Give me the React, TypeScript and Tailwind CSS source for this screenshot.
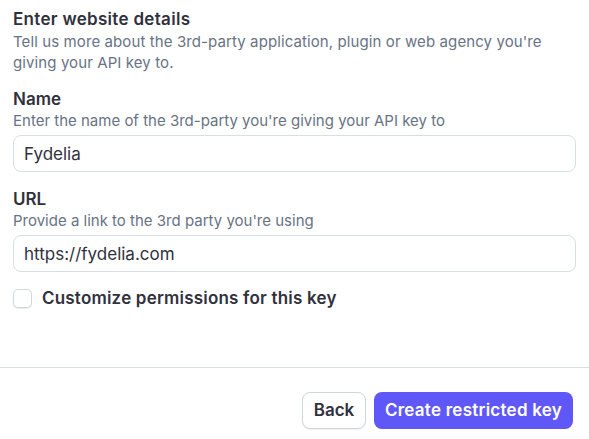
export default function App() {
  return (
    <div className="w-[589px] h-[439px] bg-white flex flex-col text-[#30313d]" style={{ fontFamily: 'Inter, "Noto Sans", sans-serif' }}>
      <div className="flex-1 px-[13px] pt-[7px]">
        <h2 className="text-[17px] leading-[24px] font-semibold tracking-[0.3px]">Enter website details</h2>
        <p className="text-[15px] leading-[21px] text-[#687385] tracking-[0.1px]">
          Tell us more about the 3rd-party application, plugin or web agency you're giving your API key to.
        </p>

        <div className="mt-[14px]">
          <label className="block text-[17px] leading-[24px] font-semibold">Name</label>
          <p className="text-[15px] leading-[20px] text-[#687385]">Enter the name of the 3rd-party you're giving your API key to</p>
          <input
            defaultValue="Fydelia"
            className="mt-[4px] w-full h-[37px] rounded-[8px] border border-[#d8dee4] px-[10px] text-[17px] text-[#30313d] outline-none"
          />
        </div>

        <div className="mt-[15px]">
          <label className="block text-[17px] leading-[24px] font-semibold">URL</label>
          <p className="text-[15px] leading-[20px] text-[#687385]">Provide a link to the 3rd party you're using</p>
          <input
            defaultValue="https://fydelia.com"
            className="mt-[4px] w-full h-[37px] rounded-[8px] border border-[#d8dee4] px-[10px] text-[17px] text-[#30313d] outline-none"
          />
        </div>

        <label className="mt-[14px] flex items-center gap-[10px]">
          <span className="w-[19px] h-[19px] rounded-[5px] border border-[#d0d6de] shadow-[0_1px_1px_rgba(0,0,0,0.08)] bg-white" />
          <span className="text-[17px] font-semibold tracking-[0.2px]">Customize permissions for this key</span>
        </label>
      </div>

      <div className="border-t border-[#d8dee4] h-[72px] flex items-start justify-end gap-[8px] px-[16px] pt-[24px]">
        <button className="h-[37px] w-[64px] rounded-[8px] border border-[#d0d6de] bg-white text-[17px] font-semibold text-[#30313d] shadow-[0_1px_1px_rgba(0,0,0,0.06)]">
          Back
        </button>
        <button className="h-[37px] w-[199px] rounded-[8px] bg-[#5f57f8] text-[17px] font-semibold tracking-[0.25px] text-white">
          Create restricted key
        </button>
      </div>
    </div>
  )
}
